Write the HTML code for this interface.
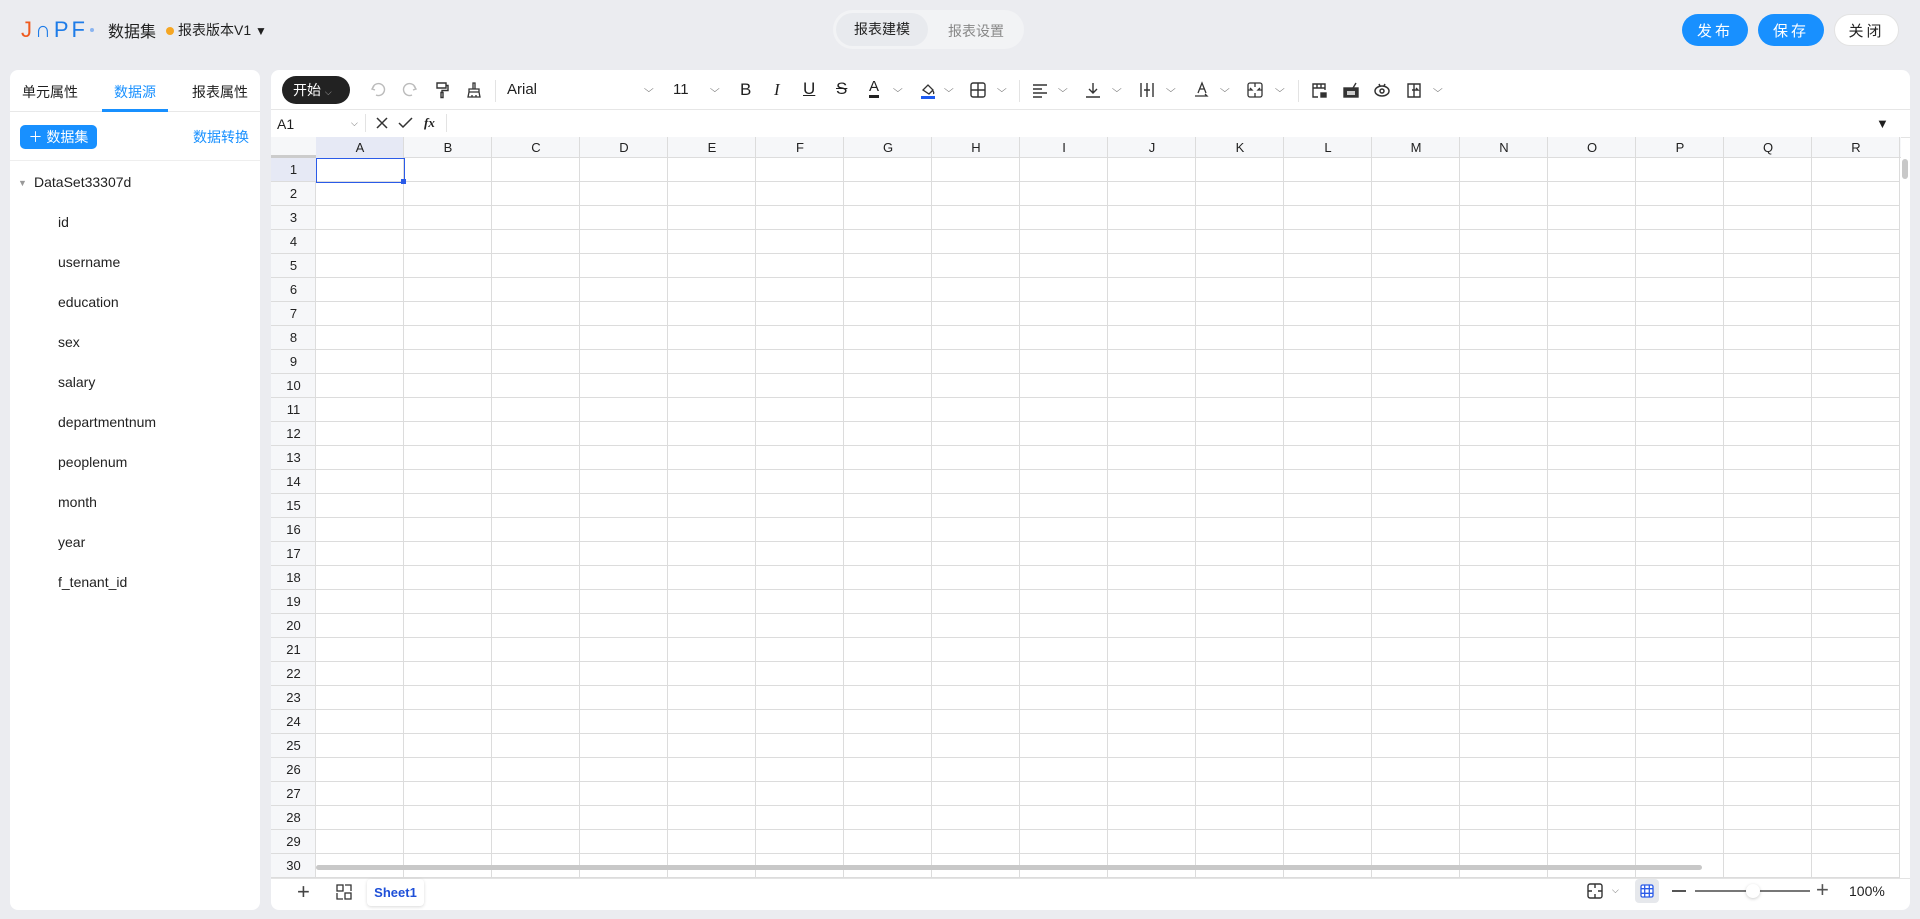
<!DOCTYPE html>
<html><head><meta charset="utf-8"><style>
*{box-sizing:border-box;margin:0;padding:0}
body{width:1920px;height:919px;background:#ebecf0;font-family:"Liberation Sans","Noto Sans CJK SC",sans-serif;color:#1f1f1f;position:relative;overflow:hidden;font-size:14px}
.abs{position:absolute}
.btn{position:absolute;top:14px;height:32px;border-radius:16px;font-size:15px;display:flex;align-items:center;justify-content:center;letter-spacing:3px}
.blue{background:#1890ff;color:#fff}
.panel{position:absolute;background:#fff;border-radius:8px}
.ic{position:absolute;top:80px;width:20px;height:20px}
.chev{position:absolute;top:84px;font-size:10px;color:#666;transform:scaleX(1.3)}
.field{position:absolute;left:58px;font-size:14px;color:#222}
.rn{position:absolute;left:0;width:45px;height:24px;text-align:center;line-height:24px;font-size:13px;color:#222}
.cl{position:absolute;top:0;width:88px;height:21px;text-align:center;line-height:21px;font-size:13px;color:#222}
</style></head><body>
<!-- header -->
<div class="abs" style="left:21px;top:17px;font-size:22px;letter-spacing:3px;font-family:'Liberation Sans',sans-serif"><span style="color:#ef5a1e">J</span><span style="color:#1e7ce8">∩PF</span></div>
<div class="abs" style="left:90px;top:28px;width:4px;height:4px;border-radius:2px;background:#8ab4f0"></div>
<div class="abs" style="left:108px;top:18px;font-size:16px">数据集</div>
<div class="abs" style="left:166px;top:27px;width:8px;height:8px;border-radius:4px;background:#f5a623"></div>
<div class="abs" style="left:178px;top:20px;font-size:14px">报表版本V1 <span style="font-size:12px">▼</span></div>
<div class="abs" style="left:833px;top:10px;width:191px;height:39px;border-radius:20px;background:#f2f3f5"></div>
<div class="abs" style="left:836px;top:13px;width:92px;height:33px;border-radius:17px;background:#e8eaee;font-size:14px;text-align:center;line-height:33px;color:#222">报表建模</div>
<div class="abs" style="left:948px;top:21px;font-size:14px;color:#888">报表设置</div>
<div class="btn blue" style="left:1682px;width:66px">发布</div>
<div class="btn blue" style="left:1758px;width:66px">保存</div>
<div class="btn" style="left:1834px;width:65px;background:#fff;border:1px solid #e3e3e3;color:#222">关闭</div>

<!-- left panel -->
<div class="panel" style="left:10px;top:70px;width:250px;height:840px">
 <div class="abs" style="left:12px;top:12px;font-size:14px">单元属性</div>
 <div class="abs" style="left:104px;top:12px;font-size:14px;color:#1890ff">数据源</div>
 <div class="abs" style="left:182px;top:12px;font-size:14px">报表属性</div>
 <div class="abs" style="left:0;top:41px;width:250px;height:1px;background:#e8e8e8"></div>
 <div class="abs" style="left:92px;top:39px;width:66px;height:3px;background:#1890ff"></div>
 <div class="abs blue" style="left:10px;top:55px;width:77px;height:24px;border-radius:5px;font-size:14px;line-height:24px;text-align:center;color:#fff">＋ 数据集</div>
 <div class="abs" style="left:183px;top:57px;font-size:14px;color:#1890ff">数据转换</div>
 <div class="abs" style="left:0;top:90px;width:250px;height:1px;background:#eee"></div>
 <div class="abs" style="left:8px;top:108px;font-size:9px;color:#999">▼</div>
 <div class="abs" style="left:24px;top:104px;font-size:14px">DataSet33307d</div>
</div>
<div class="field" style="top:214px">id</div>
<div class="field" style="top:254px">username</div>
<div class="field" style="top:294px">education</div>
<div class="field" style="top:334px">sex</div>
<div class="field" style="top:374px">salary</div>
<div class="field" style="top:414px">departmentnum</div>
<div class="field" style="top:454px">peoplenum</div>
<div class="field" style="top:494px">month</div>
<div class="field" style="top:534px">year</div>
<div class="field" style="top:574px">f_tenant_id</div>

<!-- main panel -->
<div class="panel" style="left:271px;top:70px;width:1639px;height:840px"></div>
<div class="abs" style="left:271px;top:109px;width:1639px;height:1px;background:#e6e6e6"></div>
<div class="abs" style="left:282px;top:76px;width:68px;height:28px;border-radius:14px;background:#222;color:#fff;font-size:14px;line-height:28px;padding-left:11px">开始 <span style="font-size:9px;color:#aaa">⌵</span></div>
<svg class="ic" style="left:368px" viewBox="0 0 20 20" fill="none" stroke="#bbb" stroke-width="1.4"><path d="M6 6 L4 9 L7 10 M4.5 9 A6 6 0 1 1 8 15"/></svg>
<svg class="ic" style="left:400px" viewBox="0 0 20 20" fill="none" stroke="#bbb" stroke-width="1.4"><path d="M14 6 L16 9 L13 10 M15.5 9 A6 6 0 1 0 12 15"/></svg>
<svg class="ic" style="left:432px" viewBox="0 0 20 20" fill="none" stroke="#333" stroke-width="1.4"><path d="M5 3h9v5H5zM14 5.5h2v5h-6v2M9 12.5h2v5H9z"/></svg>
<svg class="ic" style="left:464px" viewBox="0 0 20 20" fill="none" stroke="#333" stroke-width="1.3"><path d="M9 3h2v6H9zM5 9h10v3H5zM5 12l-1 5h12l-1-5M8 15v2M12 15v2"/></svg>
<div class="abs" style="left:495px;top:80px;width:1px;height:22px;background:#e3e3e3"></div>
<div class="abs" style="left:507px;top:81px;font-size:15px">Arial</div>
<div class="chev" style="left:645px">⌵</div>
<div class="abs" style="left:673px;top:81px;font-size:15px">11</div>
<div class="chev" style="left:711px">⌵</div>
<div class="abs" style="left:740px;top:80px;font-size:17px">B</div>
<div class="abs" style="left:774px;top:80px;font-size:17px;font-style:italic;font-family:'Liberation Serif',serif">I</div>
<div class="abs" style="left:803px;top:79px;font-size:17px;text-decoration:underline">U</div>
<div class="abs" style="left:836px;top:79px;font-size:17px;text-decoration:line-through">S</div>
<div class="abs" style="left:869px;top:79px;font-size:15px;border-bottom:3px solid #222;line-height:16px">A</div><div class="chev" style="left:894px">⌵</div>
<svg class="ic" style="left:918px" viewBox="0 0 20 20" fill="none" stroke="#333" stroke-width="1.3"><path d="M5 10l5-5 5 5-4 4zM15 11c1 1.5 1 2.5 0 2.5"/><rect x="3" y="16" width="14" height="3" fill="#1e5bf0" stroke="none"/></svg><div class="chev" style="left:945px">⌵</div>
<svg class="ic" style="left:968px" viewBox="0 0 20 20" fill="none" stroke="#333" stroke-width="1.4"><rect x="3" y="3" width="14" height="14" rx="2"/><path d="M10 3v14M3 10h14"/></svg><div class="chev" style="left:998px">⌵</div>
<div class="abs" style="left:1019px;top:80px;width:1px;height:22px;background:#e3e3e3"></div>
<svg class="ic" style="left:1030px" viewBox="0 0 20 20" stroke="#333" stroke-width="1.4"><path d="M3 5h14M3 9h9M3 13h14M3 17h9"/></svg><div class="chev" style="left:1059px">⌵</div>
<svg class="ic" style="left:1083px" viewBox="0 0 20 20" fill="none" stroke="#333" stroke-width="1.4"><path d="M10 3v10M6 9l4 4 4-4M3 17h14"/></svg><div class="chev" style="left:1113px">⌵</div>
<svg class="ic" style="left:1137px" viewBox="0 0 20 20" fill="none" stroke="#333" stroke-width="1.4"><path d="M4 3v14M16 3v14M10 3v14M7 10h6"/></svg><div class="chev" style="left:1167px">⌵</div>
<svg class="ic" style="left:1192px" viewBox="0 0 20 20" fill="none" stroke="#333" stroke-width="1.3"><path d="M6 13l4-10 4 10M7.5 9h5M3 16h12l-2-2"/></svg><div class="chev" style="left:1221px">⌵</div>
<svg class="ic" style="left:1245px" viewBox="0 0 20 20" fill="none" stroke="#333" stroke-width="1.3"><rect x="3" y="3" width="14" height="14" rx="2"/><path d="M10 3v4M10 13v4M3 10h4l-2-2M17 10h-4l2-2"/></svg><div class="chev" style="left:1276px">⌵</div>
<div class="abs" style="left:1298px;top:80px;width:1px;height:22px;background:#e3e3e3"></div>
<svg class="ic" style="left:1309px" viewBox="0 0 20 20" fill="none" stroke="#333" stroke-width="1.4"><path d="M9 17H4V4h12v6M4 8h12M8 4v4M12 4v4"/><rect x="12" y="13" width="5" height="4" fill="#333"/></svg>
<svg class="ic" style="left:1341px" viewBox="0 0 20 20" fill="none" stroke="#333" stroke-width="1.4"><rect x="3" y="8" width="14" height="9" fill="#333"/><path d="M12 8l3-5"/><path d="M6 12h8M6 14h8" stroke="#fff"/></svg>
<svg class="ic" style="left:1372px" viewBox="0 0 20 20" fill="none" stroke="#333" stroke-width="1.5"><ellipse cx="10" cy="11" rx="7" ry="5"/><circle cx="10" cy="11" r="2"/><path d="M7 4l1 2M13 4l-1 2"/></svg>
<svg class="ic" style="left:1404px" viewBox="0 0 20 20" fill="none" stroke="#333" stroke-width="1.4"><path d="M10 4H4v13h6M10 4h6v13h-6M10 4v13M8 10h6l-2-2"/></svg><div class="chev" style="left:1434px">⌵</div>

<!-- formula bar -->
<div class="abs" style="left:277px;top:116px;font-size:14px">A1</div>
<div class="abs" style="left:351px;top:118px;font-size:9px;color:#666">⌵</div>
<div class="abs" style="left:365px;top:114px;width:1px;height:18px;background:#e3e3e3"></div>
<svg class="abs" style="left:375px;top:116px" width="14" height="14" viewBox="0 0 14 14" stroke="#333" stroke-width="1.5"><path d="M2 2l10 10M12 2L2 12"/></svg>
<svg class="abs" style="left:398px;top:116px" width="15" height="14" viewBox="0 0 15 14" fill="none" stroke="#333" stroke-width="1.5"><path d="M1 7l4 4 9-9"/></svg>
<div class="abs" style="left:424px;top:115px;font-size:13px;font-style:italic;font-weight:bold;font-family:'Liberation Serif',serif">fx</div>
<div class="abs" style="left:446px;top:114px;width:1px;height:18px;background:#e3e3e3"></div>
<div class="abs" style="left:1876px;top:116px;font-size:13px">▼</div>
<div class="abs" style="left:271px;top:137px;width:1639px;height:1px;background:#e3e3e3"></div>

<!-- grid -->
<div class="abs" style="left:271px;top:137px;width:1630px;height:21px;background:#f6f7f9;border-bottom:1px solid #ddd"></div>
<div class="abs" style="left:271px;top:158px;width:45px;height:720px;background:#f6f7f9;border-right:1px solid #ddd"></div>
<div class="abs" style="left:271px;top:155px;width:45px;height:3px;background:#ccc"></div>
<div class="abs" style="left:316px;top:137px;width:88px;height:21px;background:#e6e9f5"></div>
<div class="abs" style="left:271px;top:158px;width:45px;height:24px;background:#e6e9f5"></div>
<div class="abs" style="left:316px;top:137px;width:1584px;height:21px;background-image:repeating-linear-gradient(to right,transparent 0 87px,#dcdcdc 87px 88px)"></div>
<div class="abs" style="left:316px;top:158px;width:1584px;height:720px;background-image:repeating-linear-gradient(to right,transparent 0 87px,#dcdcdc 87px 88px),repeating-linear-gradient(to bottom,transparent 0 23px,#dcdcdc 23px 24px);background-color:#fff"></div>
<div class="abs" style="left:271px;top:158px;width:45px;height:720px;background-image:repeating-linear-gradient(to bottom,transparent 0 23px,#dcdcdc 23px 24px)"></div>
<div class="abs" style="left:316px;top:158px;width:89px;height:25px;border:1px solid #2b5be8"></div>
<div class="abs" style="left:401px;top:179px;width:5px;height:5px;background:#2b5be8"></div>
<div id="cols" class="abs" style="left:316px;top:137px"></div>
<div id="rows" class="abs" style="left:271px;top:158px"></div>
<div class="abs" style="left:1901px;top:158px;width:9px;height:720px;background:#fff"></div>
<div class="abs" style="left:1902px;top:159px;width:6px;height:20px;border-radius:3px;background:#c8c8c8"></div>
<div class="abs" style="left:316px;top:865px;width:1386px;height:5px;border-radius:3px;background:#c8c8c8"></div>
<div class="abs" style="left:271px;top:878px;width:1639px;height:1px;background:#e3e3e3"></div>

<!-- bottom -->
<div class="abs" style="left:297px;top:879px;font-size:22px;color:#444;font-weight:300">+</div>
<svg class="abs" style="left:335px;top:883px" width="18" height="18" viewBox="0 0 18 18" fill="none" stroke="#333" stroke-width="1.3"><rect x="2" y="2" width="6" height="6"/><rect x="10" y="10" width="6" height="6"/><path d="M10 2h6v6M2 10v6h6"/></svg>
<div class="abs" style="left:367px;top:879px;width:57px;height:27px;border-radius:4px;background:#fff;box-shadow:0 1px 3px rgba(0,0,0,.15);color:#1e4fd8;font-size:13px;font-weight:bold;text-align:center;line-height:27px">Sheet1</div>
<svg class="abs" style="left:1587px;top:883px" width="16" height="16" viewBox="0 0 16 16" fill="none" stroke="#333" stroke-width="1.4"><rect x="1" y="1" width="14" height="14" rx="2"/><path d="M8 1v4M8 11v4M1 8h4M11 8h4"/></svg>
<div class="abs" style="left:1612px;top:885px;font-size:9px;color:#666">⌵</div>
<div class="abs" style="left:1635px;top:879px;width:24px;height:24px;border-radius:4px;background:#e6e8ec"></div>
<svg class="abs" style="left:1640px;top:884px" width="14" height="14" viewBox="0 0 14 14" fill="#fff" stroke="#2b5be8" stroke-width="1.3"><rect x="1" y="1" width="12" height="12" rx="1.5"/><path d="M4.7 1v12M9.3 1v12M1 4.7h12M1 9.3h12"/></svg>
<div class="abs" style="left:1672px;top:890px;width:14px;height:2px;background:#555"></div>
<div class="abs" style="left:1695px;top:890px;width:115px;height:1.5px;background:#777"></div>
<div class="abs" style="left:1746px;top:884px;width:14px;height:14px;border-radius:7px;background:#fff;box-shadow:0 1px 3px rgba(0,0,0,.2)"></div>
<div class="abs" style="left:1816px;top:877px;font-size:22px;color:#555;font-weight:300">+</div>
<div class="abs" style="left:1849px;top:883px;font-size:14px">100%</div>

<script>
var c=document.getElementById('cols'),h='';
"ABCDEFGHIJKLMNOPQR".split('').forEach(function(l,i){h+='<div class="cl" style="left:'+(i*88)+'px">'+l+'</div>'});c.innerHTML=h;
var r=document.getElementById('rows');h='';
for(var i=1;i<=30;i++)h+='<div class="rn" style="top:'+((i-1)*24)+'px">'+i+'</div>';r.innerHTML=h;
</script>
</body></html>
